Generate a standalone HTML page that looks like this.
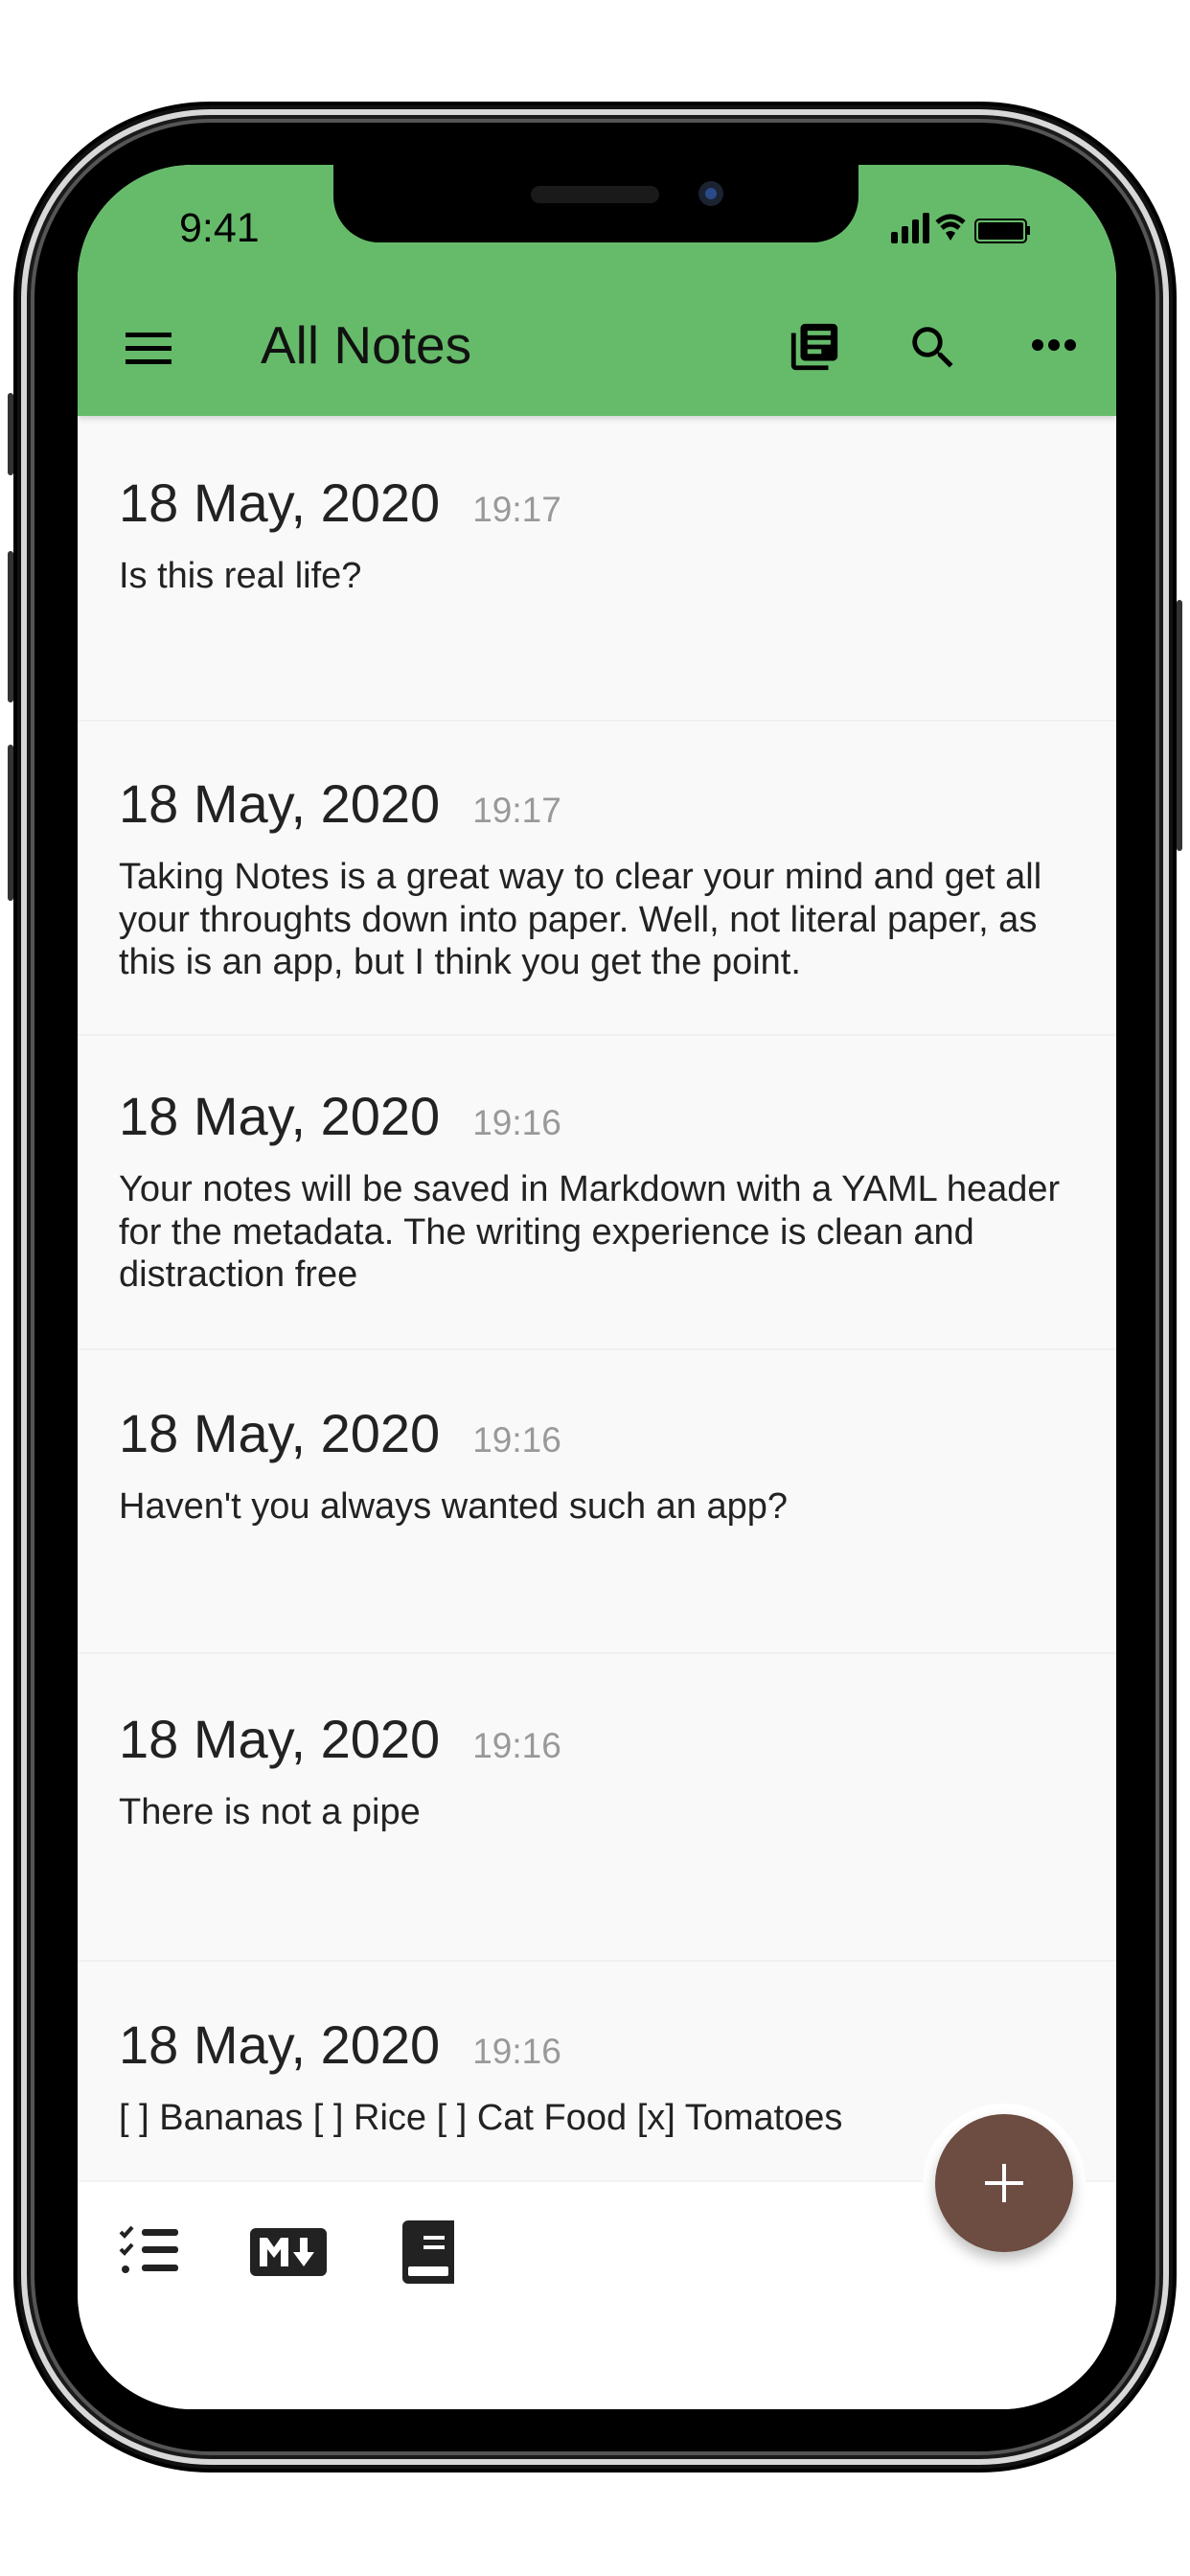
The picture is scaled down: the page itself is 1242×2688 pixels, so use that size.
<!DOCTYPE html>
<html><head><meta charset="utf-8"><style>
*{margin:0;padding:0;box-sizing:border-box}
body{width:1242px;height:2688px;background:#fff;position:relative;overflow:hidden;font-family:"Liberation Sans",sans-serif}
.abs{position:absolute}
.frame{left:14px;top:106px;width:1214px;height:2474px;border-radius:205px;background:#111;border:4px solid #000}
.ring{left:22px;top:114px;width:1198px;height:2458px;border-radius:198px;border:6px solid #d8d8d8;background:#1a1a1a}
.ring2{left:32px;top:124px;width:1178px;height:2438px;border-radius:188px;background:#000;border:4px solid #555}
.screen{left:81px;top:172px;width:1084px;height:2342px;border-radius:120px;background:#f9f9f9;overflow:hidden}
.bar{left:0;top:0;width:1084px;height:262px;background:#66bb6a;box-shadow:0 3px 6px rgba(0,0,0,.15)}
.notch{left:267px;top:-2px;width:548px;height:83px;background:#000;border-radius:0 0 48px 48px}
.date{font-size:56px;color:#222}
.time{font-size:37px;color:#999;margin-left:34px}
.note{position:absolute;left:43px;width:1020px}
.body{font-size:38px;color:#222;line-height:44.6px;margin-top:22px}
.div{position:absolute;left:0;width:1084px;height:2px;background:#f0f0f0}
</style></head><body>
<div class="abs frame"></div>
<div class="abs ring"></div>
<div class="abs ring2"></div>
<div class="abs" style="left:8px;top:410px;width:6px;height:86px;background:#333;border-radius:3px"></div>
<div class="abs" style="left:8px;top:575px;width:6px;height:158px;background:#333;border-radius:3px"></div>
<div class="abs" style="left:8px;top:777px;width:6px;height:163px;background:#333;border-radius:3px"></div>
<div class="abs" style="left:1228px;top:626px;width:6px;height:262px;background:#333;border-radius:3px"></div>
<div class="abs screen">
 <div class="abs bar">
  <div class="abs" style="left:106px;top:42px;font-size:43px;color:#000">9:41</div>
  <svg class="abs" style="left:845px;top:48px" width="150" height="36" viewBox="0 0 150 36">
   <rect x="4" y="22" width="7" height="12" rx="2"/><rect x="15" y="16" width="7" height="18" rx="2"/><rect x="26" y="9" width="7" height="25" rx="2"/><rect x="37" y="2" width="7" height="32" rx="2"/>
   <path d="M52 12 Q66 0 80 12" stroke="#000" stroke-width="5" fill="none"/><path d="M57 18 Q66 10 75 18" stroke="#000" stroke-width="5" fill="none"/><path d="M61 23 L66 31 L71 23 Q66 19 61 23Z"/>
   <rect x="92" y="9" width="53" height="24" rx="4" fill="none" stroke="#000" stroke-width="2"/><rect x="95" y="12" width="47" height="18" rx="2"/><rect x="146" y="16" width="3" height="9"/>
  </svg>
  <svg class="abs" style="left:50px;top:175px" width="50" height="34" viewBox="0 0 50 34"><rect y="0" width="48" height="5"/><rect y="14" width="48" height="5"/><rect y="28" width="48" height="5"/></svg>
  <div class="abs" style="left:191px;top:156px;font-size:55px;color:#111">All Notes</div>
  <svg class="abs" style="left:740px;top:161px" width="58" height="58" viewBox="0 0 24 24"><path d="M4 6H2v14c0 1.1.9 2 2 2h14v-2H4V6zm16-4H8c-1.1 0-2 .9-2 2v12c0 1.1.9 2 2 2h12c1.1 0 2-.9 2-2V4c0-1.1-.9-2-2-2zm-1 9H9V9h10v2zm-4 4H9v-2h6v2zm4-8H9V5h10v2z"/></svg>
  <svg class="abs" style="left:864px;top:162px" width="58" height="58" viewBox="0 0 24 24"><path d="M15.5 14h-.79l-.28-.27A6.47 6.47 0 0016 9.5 6.5 6.5 0 109.5 16c1.61 0 3.09-.59 4.23-1.57l.27.28v.79l5 4.99L20.49 19l-4.99-5zm-6 0C7.01 14 5 11.99 5 9.5S7.01 5 9.5 5 14 7.01 14 9.5 11.99 14 9.5 14z"/></svg>
  <svg class="abs" style="left:995px;top:181px" width="48" height="14" viewBox="0 0 48 14"><circle cx="7" cy="7" r="6"/><circle cx="24" cy="7" r="6"/><circle cx="41" cy="7" r="6"/></svg>
 </div>
 <div class="abs notch"></div>
 <div class="abs" style="left:473px;top:22px;width:134px;height:18px;border-radius:9px;background:#1a1a1a"></div>
 <div class="abs" style="left:648px;top:17px;width:26px;height:26px;border-radius:50%;background:#1b2230"><div style="margin:7px;width:12px;height:12px;border-radius:50%;background:#2a4a8a"></div></div>

 <div class="note" style="top:320px"><span class="date">18 May, 2020</span><span class="time">19:17</span><div class="body">Is this real life?</div></div>
 <div class="div" style="top:579px"></div>
 <div class="note" style="top:634px"><span class="date">18 May, 2020</span><span class="time">19:17</span><div class="body">Taking Notes is a great way to clear your mind and get all your throughts down into paper. Well, not literal paper, as this is an app, but I think you get the point.</div></div>
 <div class="div" style="top:907px"></div>
 <div class="note" style="top:960px"><span class="date">18 May, 2020</span><span class="time">19:16</span><div class="body">Your notes will be saved in Markdown with a YAML header for the metadata. The writing experience is clean and distraction free</div></div>
 <div class="div" style="top:1235px"></div>
 <div class="note" style="top:1291px"><span class="date">18 May, 2020</span><span class="time">19:16</span><div class="body">Haven't you always wanted such an app?</div></div>
 <div class="div" style="top:1552px"></div>
 <div class="note" style="top:1610px"><span class="date">18 May, 2020</span><span class="time">19:16</span><div class="body">There is not a pipe</div></div>
 <div class="div" style="top:1873px"></div>
 <div class="note" style="top:1929px"><span class="date">18 May, 2020</span><span class="time">19:16</span><div class="body">[ ] Bananas [ ] Rice [ ] Cat Food [x] Tomatoes</div></div>

 <div class="abs" style="left:0;top:2105px;width:1084px;height:300px;background:#fff;box-shadow:0 -1px 3px rgba(0,0,0,.05)"></div>
 <div class="abs" style="left:882px;top:2023px;width:170px;height:170px;border-radius:50%;background:#fff"></div>
 <div class="abs" style="left:895px;top:2034px;width:144px;height:144px;border-radius:50%;background:#6d4c41;box-shadow:0 8px 14px rgba(0,0,0,.25)"></div>
 <div class="abs" style="left:947px;top:2104px;width:40px;height:4px;background:#fff"></div>
 <div class="abs" style="left:965px;top:2086px;width:4px;height:40px;background:#fff"></div>
 <svg class="abs" style="left:43px;top:2150px" width="64" height="52" viewBox="0 0 64 52"><path d="M2 7l4 4 8-9" stroke="#222" stroke-width="4" fill="none"/><path d="M2 25l4 4 8-9" stroke="#222" stroke-width="4" fill="none"/><circle cx="7" cy="46" r="4" fill="#222"/><rect x="24" y="4" width="38" height="7" rx="3" fill="#222"/><rect x="24" y="22" width="38" height="7" rx="3" fill="#222"/><rect x="24" y="41" width="38" height="7" rx="3" fill="#222"/></svg>
 <svg class="abs" style="left:180px;top:2153px" width="80" height="50" viewBox="0 0 80 50"><rect width="80" height="50" rx="6" fill="#222"/><path d="M10 40V10h8l7 10 7-10h8v30h-8V22l-7 9-7-9v18z" fill="#fff"/><path d="M52 10h8v15h7L56 40 45 25h7z" fill="#fff"/></svg>
 <svg class="abs" style="left:339px;top:2145px" width="56" height="66" viewBox="0 0 56 66"><path d="M6 0h48v66H6a6 6 0 01-6-6V6a6 6 0 016-6z" fill="#222"/><rect x="6" y="48" width="42" height="10" rx="2" fill="#fff"/><rect x="22" y="16" width="22" height="4" fill="#fff"/><rect x="22" y="26" width="22" height="4" fill="#fff"/></svg>
</div>
</body></html>
